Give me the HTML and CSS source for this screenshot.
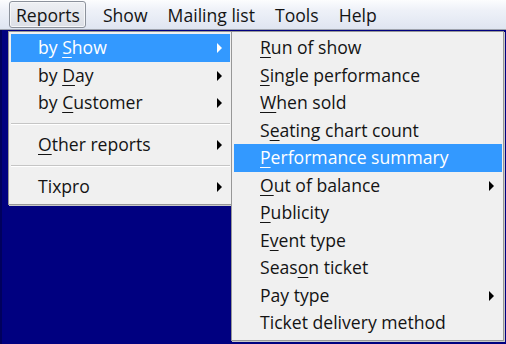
FILE: index.html
```html
<!DOCTYPE html>
<html lang="en">
<head>
    <meta charset="UTF-8">
    <meta name="viewport" content="width=device-width, initial-scale=1.0">
    <title>Reports menu</title>

    <link rel="stylesheet" href="styles.css">

</head>
<body>

    <div class="menubar">
        <div class="top-item open">Reports</div>
        <div class="top-item">Show</div>
        <div class="top-item">Mailing list</div>
        <div class="top-item">Tools</div>
        <div class="top-item">Help</div>
    </div>

    <div class="desktop">

        <div class="menu main-menu">
            <div class="item active sub">by <u>S</u>how</div>
            <div class="item sub">by <u>D</u>ay</div>
            <div class="item sub">by <u>C</u>ustomer</div>
            <div class="sep"></div>
            <div class="item sub"><u>O</u>ther reports</div>
            <div class="sep"></div>
            <div class="item sub">Tixpro</div>
        </div>

        <div class="menu sub-menu">
            <div class="item"><u>R</u>un of show</div>
            <div class="item"><u>S</u>ingle performance</div>
            <div class="item"><u>W</u>hen sold</div>
            <div class="item">S<u>e</u>ating chart count</div>
            <div class="item active"><u>P</u>erformance summary</div>
            <div class="item sub"><u>O</u>ut of balance</div>
            <div class="item"><u>P</u>ublicity</div>
            <div class="item">E<u>v</u>ent type</div>
            <div class="item">Seas<u>o</u>n ticket</div>
            <div class="item sub">Pay type</div>
            <div class="item">Ticket delivery method</div>
        </div>

    </div>

</body>
</html>
```

FILE: styles.css
```css
html, body {
margin: 0;
height: 100%;
}

body {
font-family: "Open Sans", "Noto Sans", sans-serif;
font-size: 17.6px;
color: #141414;
display: flex;
flex-direction: column;
overflow: hidden;
}

.menubar {
height: 29px;
border-bottom: 1px solid #9ea3ad;
background: linear-gradient(#fcfdfe, #eef1f8 35%, #dfe5f1);
display: flex;
align-items: center;
padding-left: 9px;
gap: 2px;
}

.top-item {
height: 27px;
line-height: 27px;
padding: 0 8px;
box-sizing: border-box;
border: 1px solid transparent;
}

.top-item.open {
padding: 0 5px 0 6px;
border-color: #8c929c;
border-radius: 3px;
background: linear-gradient(#eef0f4, #dcdfe6);
box-shadow: inset 0 0 0 1px #f6f7f9;
margin-right: 6px;
}

.desktop {
flex: 1;
background: #000080;
border-left: 2px solid #00005c;
position: relative;
}

/* dropdowns lie over the desktop */
.menu {
position: absolute;
background: #f0f0f0;
border: 1px solid #979797;
padding: 2px 1px 3px 2px;
box-shadow: 1px 1px 0 #c9c9c9;
}

.main-menu {
top: 1px;
left: 6px;
width: 219px;
}

.sub-menu {
top: 1px;
left: 229px;
width: 268px;
}

.item {
height: 27.5px;
line-height: 27px;
padding-left: 27px;
position: relative;
white-space: nowrap;
}

.sub-menu .item {
padding-left: 26px;
}

.item u {
text-decoration-thickness: 1px;
text-underline-offset: 3px;
}

.item.active {
background: #3399ff;
color: #fff;
}

.item.sub::after {
content: "";
position: absolute;
right: 8px;
top: 9px;
border-left: 5px solid #000;
border-top: 5px solid transparent;
border-bottom: 5px solid transparent;
}

.item.active.sub::after {
border-left-color: #fff;
}

.sep {
height: 14.5px;
display: flex;
align-items: center;
}

.sep::before {
content: "";
flex: 1;
height: 1px;
background: #c5c5c5;
border-bottom: 1px solid #fff;
}
```
